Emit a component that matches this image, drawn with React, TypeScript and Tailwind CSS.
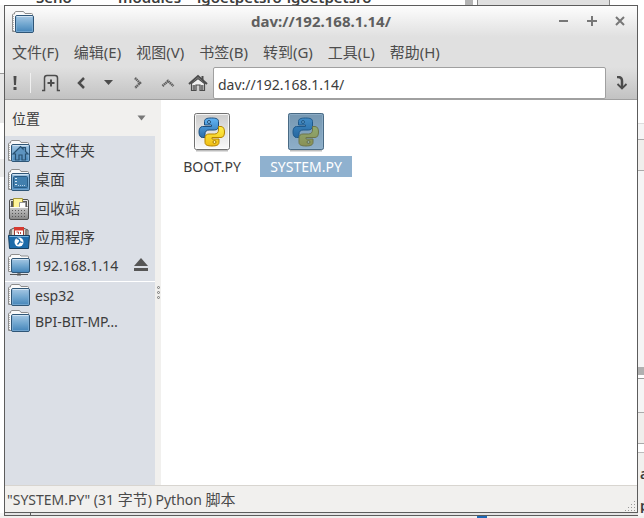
import { useState } from "react";
import type { ReactNode } from "react";

function Defs() {
  return (
    <svg width="0" height="0" className="absolute" aria-hidden="true">
      <defs>
        <linearGradient id="folderBlue" x1="0" y1="0" x2="0" y2="1">
          <stop offset="0" stopColor="#a9c9e4" />
          <stop offset="0.5" stopColor="#73a8d0" />
          <stop offset="1" stopColor="#4283b8" />
        </linearGradient>
        <linearGradient id="paper" x1="0" y1="0" x2="0" y2="1">
          <stop offset="0" stopColor="#cbcbcb" />
          <stop offset="1" stopColor="#fafafa" />
        </linearGradient>
        <linearGradient id="pyBlue" x1="0" y1="0" x2="0" y2="1">
          <stop offset="0" stopColor="#62b5f6" />
          <stop offset="1" stopColor="#2b6ca8" />
        </linearGradient>
        <linearGradient id="pyYellow" x1="0" y1="0" x2="0" y2="1">
          <stop offset="0" stopColor="#fff04a" />
          <stop offset="1" stopColor="#f0bd12" />
        </linearGradient>
        <linearGradient id="bin" x1="0" y1="0" x2="0" y2="1">
          <stop offset="0" stopColor="#f4f4f4" />
          <stop offset="1" stopColor="#858585" />
        </linearGradient>
      </defs>
    </svg>
  );
}

function Folder({ children }: { children?: ReactNode }) {
  return (
    <svg width="24" height="24" viewBox="0 0 24 24" className="shrink-0" aria-hidden="true">
      <path d="M1.5 21.5V5q0-1 1-1h1V2.500L5 1.500h7.500L14 3.500h6.500q1 0 1 1v17z" fill="#fafafa" stroke="#8d8d8d" />
      <path d="M2.500 6v15" stroke="#b4b4b4" strokeDasharray="1 1" />
      <rect x="4.500" y="5.500" width="18" height="17" rx="1.500" fill="url(#folderBlue)" stroke="#2f5677" />
      <path d="M5.500 6.500h16" stroke="#d0e3f2" />
      <path d="M5.500 7v14.500h16v-14" fill="none" stroke="#83b1d6" strokeOpacity=".7" />
      {children}
    </svg>
  );
}

function HomeFolder() {
  return (
    <Folder>
      <path d="M6 15l7.500-7.500 2.500 2.500V8.500h2.500v4L21 15h-2.500v6h-3.500V16h-3v5H8.500V15z" fill="#5d94c0" stroke="#285070" strokeWidth="1.200" />
    </Folder>
  );
}

function DesktopFolder() {
  return (
    <Folder>
      <rect x="6.500" y="8.500" width="14" height="11" rx="1" fill="#417fae" stroke="#285b84" />
      <path d="M8 10.500h2M8 13.500h2M8 16.500h2" stroke="#d7e8f4" />
      <path d="M11 17.500h8" stroke="#b4d1e8" strokeDasharray="1 1" />
    </Folder>
  );
}

function Trash() {
  return (
    <svg width="24" height="24" viewBox="0 0 24 24" className="shrink-0" aria-hidden="true">
      <rect x="2.500" y="2.500" width="19" height="20" rx="1.500" fill="url(#bin)" stroke="#505050" />
      <path d="M3 3h18v7H3z" fill="#5a5a5a" />
      <path d="M3.500 9.500v-6H8" fill="none" stroke="#e8e8e8" />
      <path d="M20.500 9.500v-6H16" fill="none" stroke="#e8e8e8" />
      <path d="M6.500 10.500v-9h9v9z" fill="#fff49a" stroke="#a59739" />
      <path d="M12.500 10.500v-5h6v5z" fill="#fff" stroke="#999" />
      <path d="M3 10.500h18" stroke="#fafafa" />
      <path d="M5 13.500h15M5 16.500h15M5 19.500h15" stroke="#555" strokeDasharray="1 2" />
    </svg>
  );
}

function Apps() {
  return (
    <svg width="24" height="24" viewBox="0 0 24 24" className="shrink-0" aria-hidden="true">
      <path d="M2 10l1-6 4-2 3 2 6-2 5 2v6z" fill="#ddd9cf" stroke="#555" />
      <path d="M7.500 1.500h9v8h-9z" fill="#fff" stroke="#963a32" />
      <path d="M7 1h10v3.500H7z" fill="#d63b31" />
      <path d="M9.500 6h2v2M13.500 6v2" fill="none" stroke="#bb4a42" />
      <path d="M4 9V4M19 9V4" stroke="#666" strokeWidth="1.500" />
      <path d="M1.500 9.500h21l-1 13h-19z" fill="#1d6ba9" stroke="#153e60" />
      <path d="M2.500 10.500h19" stroke="#78b3de" />
      <circle cx="12" cy="16" r="4.500" fill="#fff" />
      <path d="M9.500 12.500q4 .5 3 3l3 1M12.500 16l-2 2.500" fill="none" stroke="#1d6ba9" strokeWidth="1.300" />
    </svg>
  );
}

function NetFolder() {
  return (
    <svg width="24" height="24" viewBox="0 0 24 24" className="shrink-0" aria-hidden="true">
      <path d="M1.500 18.500V4.500q0-1 1-1h1V2L5 1.500h7.500L14 3h6.500q1 0 1 1v14.500z" fill="#fafafa" stroke="#8d8d8d" />
      <path d="M2.500 6v12" stroke="#b4b4b4" strokeDasharray="1 1" />
      <rect x="4.500" y="5.500" width="18" height="14" rx="1.500" fill="url(#folderBlue)" stroke="#2f5677" />
      <path d="M5.500 6.500h16" stroke="#d0e3f2" />
      <path d="M3 21.500h18M12 20v2" stroke="#555" />
      <path d="M10 21.500h4" stroke="#555" strokeWidth="2" />
    </svg>
  );
}

function PythonFile({ selected }: { selected: boolean }) {
  return (
    <svg width="38" height="40" viewBox="0 0 38 40" aria-hidden="true">
      <path d="M3 38.500h32" stroke="#bdbdbd" strokeWidth="2" />
      <rect x="1.500" y="1.500" width="35" height="36" rx="2" fill="url(#paper)" stroke="#717171" />
      <rect x="2.500" y="2.500" width="33" height="34" rx="1" fill="none" stroke="#fff" strokeOpacity=".8" />
      <path d="M18.500 6c-5 0-7 1-7 3.500V13h7v1.500h-9c-2.500 0-3.500 2.500-3.500 5.500s1 5.500 3.500 5.500h2.500V22c0-2.500 1.500-4 4-4h5.500c2.500 0 4-1.500 4-4V9.500C25.500 7 23.500 6 18.500 6z" fill="url(#pyBlue)" stroke="#1f4f7c" />
      <path d="M25.500 14.500V18c0 2.500-1.500 4-4 4H16c-2.500 0-4 1.500-4 4v4.500c0 2.500 2.500 3.500 7 3.500s7-1 7-3.500V27h-7v-1.500h9c2.500 0 3.500-2.500 3.500-5.500s-1-5.500-3.500-5.500z" fill="url(#pyYellow)" stroke="#b58300" />
      <circle cx="16" cy="10" r="1.500" fill="#8fc8f4" stroke="#214d75" />
      <circle cx="21.500" cy="30" r="1.500" fill="#fff0a0" stroke="#a87c00" />
      {selected && <rect x="1" y="1" width="36" height="37" rx="2" fill="#216398" fillOpacity=".5" />}
    </svg>
  );
}

const menus = ["文件(F)", "编辑(E)", "视图(V)", "书签(B)", "转到(G)", "工具(L)", "帮助(H)"];

function ToolButton({ label, children, className }: { label: string; children: ReactNode; className: string }) {
  return (
    <button aria-label={label} className={`flex h-8 shrink-0 items-center justify-center ${className}`}>
      {children}
    </button>
  );
}

function Place({ icon, name, tall, eject }: { icon: ReactNode; name: string; tall?: boolean; eject?: boolean }) {
  return (
    <li className={`flex items-center pl-[2px] pr-1.5 ${tall ? "h-[29px] text-[15px]" : "h-[26px]"}`}>
      <button className="flex min-w-0 flex-1 items-center gap-1 text-left">
        {icon}
        <span className="whitespace-nowrap">{name}</span>
      </button>
      {eject && (
        <button aria-label="弹出" className="shrink-0">
          <svg width="16" height="14" viewBox="0 0 16 14" aria-hidden="true">
            <path d="M8 0l7 8H1zM1 10h14v3H1z" fill="#565656" />
          </svg>
        </button>
      )}
    </li>
  );
}

function FileItem({ name, selected, onSelect }: { name: string; selected: boolean; onSelect: () => void }) {
  return (
    <button onClick={onSelect} className="flex w-[94px] flex-col items-center gap-1">
      <PythonFile selected={selected} />
      <span className={`h-[21px] px-2.5 leading-[21px] ${selected ? "bg-[#8fb1cf] text-white" : ""}`}>{name}</span>
    </button>
  );
}

export default function App() {
  const [path, setPath] = useState("dav://192.168.1.14/");
  const [selected, setSelected] = useState("SYSTEM.PY");
  return (
    <div className="flex h-screen flex-col overflow-hidden bg-[#f5f5f5] font-['Noto_Sans','Noto_Sans_CJK_SC',sans-serif] text-[14px] text-[#3c3c3c]">
      <Defs />
      <div className="flex h-[5px] shrink-0 items-end overflow-hidden bg-white text-[15px] leading-[15px] font-semibold">
        <span className="w-[82px] shrink-0 pl-9">Seno</span>
        <span className="w-[79px] shrink-0 pl-9">modules</span>
        <span className="flex-1 pl-9 whitespace-nowrap">igoetpetsro-igoetpetsro</span>
        <span className="h-full w-2 bg-[#b4b4b4]" />
        <span className="ml-1 h-full w-[133px] border-x border-[#888] bg-[#e0e0e0]" />
        <span className="h-full w-[34px]" />
      </div>

      <div className="flex min-h-0 flex-1">
        <div className="flex w-1 shrink-0 flex-col">
          <div className="h-[69px] border-b border-[#999] bg-[#f7f7f7]" />
          <div className="h-[49px] bg-[#e8e8e8]" />
          <div className="h-9 bg-white" />
          <div className="h-[18px] bg-[#ececec]" />
          <div className="flex-1 bg-white" />
        </div>

        <main className="flex min-w-0 flex-1 flex-col border border-[#5c5c5c] bg-white">
          <header className="flex h-[31px] shrink-0 items-center bg-linear-to-b from-[#fdfdfd] to-[#e0e0e0] px-1.5">
            <div className="w-[78px]">
              <Folder />
            </div>
            <h1 className="flex-1 text-center text-[15px] font-bold text-[#5f5f5f]">dav://192.168.1.14/</h1>
            <div className="flex w-[78px] items-center justify-end gap-3 pr-[3px] text-[#777]">
              <button aria-label="最小化">
                <svg width="16" height="16" viewBox="0 0 16 16"><path d="M3 7h9" stroke="currentColor" strokeWidth="2" /></svg>
              </button>
              <button aria-label="最大化">
                <svg width="16" height="16" viewBox="0 0 16 16"><path d="M3 7h10M8 2v10" stroke="currentColor" strokeWidth="2" /></svg>
              </button>
              <button aria-label="关闭">
                <svg width="16" height="16" viewBox="0 0 16 16"><path d="M4 3l8 8M12 3l-8 8" stroke="currentColor" strokeWidth="2" /></svg>
              </button>
            </div>
          </header>

          <nav className="flex h-[30px] shrink-0 items-center gap-[15px] bg-[#e0e0e0] pl-[7px] text-[15px] text-[#4d4d4d]">
            {menus.map((m) => (
              <button key={m} className="whitespace-nowrap">{m}</button>
            ))}
          </nav>

          <div className="flex h-[33px] shrink-0 items-stretch border-b border-[#a0a0a0] bg-linear-to-b from-[#e0e0e0] to-[#c2c2c2] text-[#4c4c4c]">
            <ToolButton label="提示" className="w-5">
              <svg width="4" height="14" viewBox="0 0 4 14"><path d="M.5 0h3L3 9H1zM.5 11h3v3h-3z" fill="currentColor" /></svg>
            </ToolButton>
            <span className="mx-[5px] my-1.5 w-px bg-[#f0f0f0]" />
            <ToolButton label="新建标签" className="w-[30px]">
              <svg width="20" height="18" viewBox="0 0 20 18" fill="none" stroke="currentColor" strokeWidth="1.500">
                <path d="M1 16.500h2.500V4q0-2.500 2.500-2.500h8q2.500 0 2.500 2.500v12.500H19" />
                <path d="M6.500 9h7M10 5.500v7" strokeWidth="2" />
              </svg>
            </ToolButton>
            <ToolButton label="后退" className="w-[30px]">
              <svg width="10" height="12" viewBox="0 0 10 12" fill="none"><path d="M8 1L3 6l5 5" stroke="currentColor" strokeWidth="2.500" /></svg>
            </ToolButton>
            <ToolButton label="历史" className="w-[26px]">
              <svg width="10" height="6" viewBox="0 0 10 6"><path d="M0 0h9L4.500 5z" fill="currentColor" /></svg>
            </ToolButton>
            <ToolButton label="前进" className="w-8">
              <svg width="10" height="12" viewBox="0 0 10 12" fill="none"><path d="M2 1l5 5-5 5" stroke="#606060" strokeWidth="2.500" strokeDasharray="1.500 .5" /></svg>
            </ToolButton>
            <ToolButton label="上级" className="w-7">
              <svg width="14" height="10" viewBox="0 0 14 10" fill="none"><path d="M1.500 8L7 3l5.500 5" stroke="#606060" strokeWidth="2.500" strokeDasharray="1.500 .5" /></svg>
            </ToolButton>
            <ToolButton label="主文件夹" className="w-[31px]">
              <svg width="20" height="18" viewBox="0 0 20 18" fill="none" stroke="currentColor">
                <path d="M1 10l9-8 9 8" strokeWidth="2" />
                <path d="M14.500 2v4" strokeWidth="2" />
                <path d="M3.500 9.500v7H8V11h4v5.500h4.500v-7L10 4.500z" fill="#f0f0f0" strokeWidth="1.200" />
                <path d="M4.500 11h3v5h-3zM12.500 11h3v5h-3z" fill="#777" stroke="none" />
              </svg>
            </ToolButton>
            <input
              aria-label="地址"
              value={path}
              onChange={(e) => setPath(e.target.value)}
              className="min-w-0 flex-1 rounded-[2px] border border-[#a0a0a0] bg-white px-1 pt-0.5 text-[14px] text-[#3c3c3c] outline-none"
            />
            <ToolButton label="跳转" className="w-[31px]">
              <svg width="12" height="14" viewBox="0 0 12 14" fill="none" stroke="currentColor"><path d="M1 1h1q4 0 4 4v6" strokeWidth="2.500" /><path d="M1.500 8L6 12.500 10.500 8" strokeWidth="1.800" /></svg>
            </ToolButton>
          </div>

          <div className="flex min-h-0 flex-1">
            <aside className="flex w-[150px] shrink-0 flex-col bg-[#dbdfe6]">
              <button className="flex h-9 shrink-0 items-center justify-between bg-[#f1f0ee] pr-[9px] pl-[7px]">
                位置
                <svg width="9" height="6" viewBox="0 0 9 6"><path d="M.5.5h8l-4 5z" fill="#777" /></svg>
              </button>
              <ul>
                <Place tall icon={<HomeFolder />} name="主文件夹" />
                <Place tall icon={<DesktopFolder />} name="桌面" />
                <Place tall icon={<Trash />} name="回收站" />
                <Place tall icon={<Apps />} name="应用程序" />
                <Place icon={<NetFolder />} name="192.168.1.14" eject />
              </ul>
              <ul className="mt-[3px] border-t border-white">
                <Place icon={<Folder />} name="esp32" />
                <Place icon={<Folder />} name="BPI-BIT-MP…" />
              </ul>
            </aside>
            <div className="flex w-1.5 shrink-0 flex-col items-center justify-center gap-0.5 bg-[#f1f0ee]">
              <span className="size-[3px] rounded-full border border-[#777]" />
              <span className="size-[3px] rounded-full border border-[#777]" />
              <span className="size-[3px] rounded-full border border-[#777]" />
            </div>
            <section className="flex min-w-0 flex-1 content-start items-start pt-3 pl-1">
              {["BOOT.PY", "SYSTEM.PY"].map((f) => (
                <FileItem key={f} name={f} selected={f === selected} onSelect={() => setSelected(f)} />
              ))}
            </section>
          </div>

          <footer className="flex h-[27px] shrink-0 items-center justify-between border-t border-[#d8d5d0] bg-[#f1f0ee] pl-0.5 text-[#4a4a4a]">
            <span>
              "SYSTEM.PY" (31 <span className="text-[15px]">字节</span>) Python <span className="text-[15px]">脚本</span>
            </span>
            <svg width="12" height="12" viewBox="0 0 12 12" className="self-end" aria-hidden="true">
              <path d="M9 1.500h2M6 4.500h5M3 7.500h8M0 10.500h11" stroke="#999" strokeDasharray="1 2" />
            </svg>
          </footer>
        </main>

        <div className="flex w-1.5 shrink-0 flex-col overflow-hidden bg-[#f5f5f5]">
          <div className="h-[118px] bg-white" />
          <div className="h-4 border-t border-[#ddd]" />
          <div className="h-8 border-y border-[#aaa] bg-[#f0eeec]" />
          <div className="h-[196px]" />
          <div className="h-2 bg-[#b0b0b0]" />
          <div className="h-1 border-b border-[#999] bg-white" />
          <div className="h-[33px]" />
          <div className="h-8 border-y border-[#aaa] bg-[#f0eeec]" />
          <div className="h-[9px] border-b border-[#bbb] bg-white" />
          <div className="flex flex-1 flex-col justify-between bg-[#f1f0ee] pt-2.5 pl-0.5 font-semibold">
            <span>a</span>
            <span className="leading-[14px]">pe</span>
          </div>
        </div>
      </div>

      <div className="flex h-[5px] shrink-0 flex-col">
        <div className="mr-1.5 ml-1 flex h-[3px] border-b border-l border-[#5c5c5c] bg-[#e4e4e4]">
          <span className="w-[26px] border-r border-[#5c5c5c]" />
        </div>
        <div className="flex h-0.5 bg-[#f1f0ee]">
          <span className="w-[477px]" />
          <span className="w-2.5 bg-[#1e68b5]" />
        </div>
      </div>
    </div>
  );
}
